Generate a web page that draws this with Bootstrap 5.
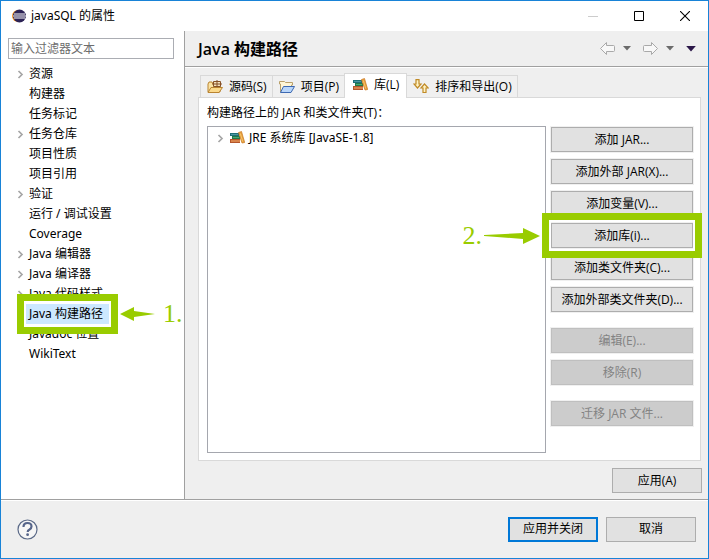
<!DOCTYPE html>
<html lang="zh-CN">
<head>
<meta charset="utf-8">
<meta name="viewport" content="width=device-width, initial-scale=1">
<title>javaSQL 的属性</title>
<link href="https://cdn.jsdelivr.net/npm/bootstrap@5.3.0/dist/css/bootstrap.min.css" rel="stylesheet">
<style>
:root{--face:#efefef;--line:#a0a0a0;--edge:#adadad;--mark:#99cc00}
body{font:12px/20px "Noto Sans","Noto Sans CJK SC",sans-serif;color:#000;background:var(--face)}
svg{display:block;flex:none}
.window{border:1px solid #1883d7;min-height:100vh}
.titlebar{height:30px;padding-left:10px}
.titlebar h1{font-size:12px;line-height:20px}
.caption-btn{width:46px;height:30px;display:grid;place-items:center}
.plain{border:0;background:none;padding:0}
.side{width:184px;border-right:1px solid var(--line);padding:7px 10px 7px 7px}
.filter{height:21px;border:1px solid #abadb3;border-radius:0;padding:0 2px;font-size:12px;line-height:19px;min-height:0}
.filter::placeholder{color:#6d6d6d;opacity:1}
.tree{margin-top:5px}
.tree li{height:20px;padding-left:7px}
.twist{width:10px;height:20px;display:grid;place-items:center}
.tree a{color:#000;text-decoration:none;white-space:nowrap;padding:0 7px 0 4px;line-height:20px}
.tree a.chosen{background:#cce8ff;position:relative;z-index:2}
.tree a.chosen .label{position:relative;z-index:2}
.callout{position:absolute;border:7px solid var(--mark);z-index:3;pointer-events:none}
.callout-tree{inset:-10px -8px;box-shadow:inset 0 0 0 2px #fff}
.callout-btn{inset:-10px -9px;box-shadow:inset 0 0 0 2px #fff}
.step{position:absolute;display:flex;align-items:center;color:var(--mark);font:26px/26px "Liberation Serif",serif;top:50%;transform:translateY(-50%);z-index:3;white-space:nowrap}
.step-tree{left:100%;margin-left:10px;gap:8px}
.step-btn{right:100%;margin-right:11px;gap:2px}
.head{height:36px;border-bottom:1px solid var(--line);box-shadow:0 1px #fff;padding:0 12px 0 13px}
.head h2{font:600 16px/24px "Open Sans","Noto Sans CJK SC",sans-serif}
.pane{padding:5px 6px 6px 13px}
.tabs{padding-left:2px;height:25px}
.tab{height:22px;border:1px solid #d9d9d9;border-bottom:0;background:#f0f0f0;padding:0 5px 0 6px;gap:6px;font:12px/20px "Open Sans","Noto Sans CJK SC",sans-serif;margin-right:-1px;white-space:nowrap;display:flex;align-items:center;color:#000}
.tab.active{height:25px;background:#fff;margin-bottom:-1px;position:relative;padding:0 7px 3px}
.tabpage{background:#fff;border:1px solid #d9d9d9;padding:5px 6px 7px 8px;margin-right:1px}
.caption{line-height:20px;margin-bottom:3px;font-family:"Open Sans","Noto Sans CJK SC",sans-serif}
.libs{border:1px solid #a5a7ae;background:#fff;min-height:320px;padding:1px 7px}
.libs li{gap:4px}
.stack{width:144px;gap:5px}
.cmd{height:27px;border:1px solid #f0f0f0;padding:0;background:#e1e1e1;box-shadow:inset 0 0 0 1px var(--edge);border-radius:0;font:12px/20px "Open Sans","Noto Sans CJK SC",sans-serif;color:#000;white-space:nowrap}
.cmd:disabled{background:#ccc;box-shadow:inset 0 0 0 1px #bfbfbf;color:#838383}
.cmd-foot{width:90px;height:25px;border-color:var(--edge);box-shadow:none}
.cmd-main{border:2px solid #0078d7}
.later{margin-top:9px}
.apply-row{padding-top:7px}
.foot{height:59px;border-top:1px solid var(--line);box-shadow:inset 0 1px #fff;padding:0 12px 0 16px;gap:8px}
</style>
<script src="https://cdn.jsdelivr.net/npm/bootstrap@5.3.0/dist/js/bootstrap.bundle.min.js"></script>
</head>
<body>
<svg width="0" height="0" class="position-absolute" aria-hidden="true">
  <symbol id="chev" viewBox="0 0 7 9"><path d="M1.500 1 5 4.500 1.500 8" fill="none" stroke="#a6a6a6" stroke-width="1.700"/></symbol>
  <symbol id="books" viewBox="0 0 16 14">
    <path d="M1 2h9v3H1z" fill="#1f6f78"/><path d="M2 3h7v1H2z" fill="#4a98a0"/>
    <path d="M3 5h8v3H3z" fill="#237a48"/><path d="M4 6h6v1H4z" fill="#49a878"/>
    <path d="M1 8h10v4H1z" fill="#b5562b"/><path d="M2 9h9v2H2z" fill="#d9854c"/>
    <path d="m9.500 1.500 3-1 3.200 11-2.700.5z" fill="#e7a13c" stroke="#c97722" stroke-width=".7"/><path d="m11.300 2.500 2.400 8" stroke="#f6c56c"/>
  </symbol>
  <symbol id="down" viewBox="0 0 8 5"><path d="M0 0h8L4 4.500z" fill="currentColor"/></symbol>
</svg>
<div class="window d-flex flex-column">
  <header class="titlebar bg-white d-flex align-items-center">
    <svg width="16" height="16" viewBox="0 0 16 16"><circle cx="7" cy="8" r="6" fill="#f7941e"/><circle cx="8.500" cy="8" r="6.500" fill="#2c2255"/><path d="M3 6h11M2 8h13M3 10h11" stroke="#fff" stroke-width="1.100"/></svg>
    <h1 class="m-0 ms-1 fw-normal flex-grow-1">javaSQL 的属性</h1>
    <button class="plain caption-btn" disabled aria-label="最小化"><svg width="10" height="10"><path d="M0 5.500h10" stroke="#ccc"/></svg></button>
    <button class="plain caption-btn" aria-label="最大化"><svg width="10" height="10"><path d="M.5.5h9v9h-9z" fill="none" stroke="#000"/></svg></button>
    <button class="plain caption-btn" aria-label="关闭"><svg width="10" height="10"><path d="m0 0 10 10M10 0 0 10" stroke="#000" stroke-width="1.100"/></svg></button>
  </header>
  <div class="d-flex flex-grow-1">
    <nav class="side bg-white flex-shrink-0" aria-label="属性">
      <input class="form-control filter" type="text" placeholder="输入过滤器文本" aria-label="输入过滤器文本">
      <ul class="tree list-unstyled mb-0">
        <li class="d-flex"><span class="twist"><svg width="7" height="9"><use href="#chev"/></svg></span><a href="#">资源</a></li>
        <li class="d-flex"><span class="twist"></span><a href="#">构建器</a></li>
        <li class="d-flex"><span class="twist"></span><a href="#">任务标记</a></li>
        <li class="d-flex"><span class="twist"><svg width="7" height="9"><use href="#chev"/></svg></span><a href="#">任务仓库</a></li>
        <li class="d-flex"><span class="twist"></span><a href="#">项目性质</a></li>
        <li class="d-flex"><span class="twist"></span><a href="#">项目引用</a></li>
        <li class="d-flex"><span class="twist"><svg width="7" height="9"><use href="#chev"/></svg></span><a href="#">验证</a></li>
        <li class="d-flex"><span class="twist"></span><a href="#">运行 / 调试设置</a></li>
        <li class="d-flex"><span class="twist"></span><a href="#">Coverage</a></li>
        <li class="d-flex"><span class="twist"><svg width="7" height="9"><use href="#chev"/></svg></span><a href="#">Java 编辑器</a></li>
        <li class="d-flex"><span class="twist"><svg width="7" height="9"><use href="#chev"/></svg></span><a href="#">Java 编译器</a></li>
        <li class="d-flex"><span class="twist"><svg width="7" height="9"><use href="#chev"/></svg></span><a href="#">Java 代码样式</a></li>
        <li class="d-flex"><span class="twist"></span><a href="#" class="chosen" aria-current="page"><span class="callout callout-tree"></span><span class="label">Java 构建路径</span><span class="step step-tree"><svg width="35" height="14"><path d="m0 7 14-7v4l21 3-21 3v4z" fill="#9c0"/></svg>1.</span></a></li>
        <li class="d-flex"><span class="twist"></span><a href="#">Javadoc 位置</a></li>
        <li class="d-flex"><span class="twist"></span><a href="#">WikiText</a></li>
      </ul>
    </nav>
    <main class="flex-grow-1 d-flex flex-column">
      <div class="head d-flex align-items-center">
        <h2 class="m-0 flex-grow-1">Java 构建路径</h2>
        <button class="plain" aria-label="后退" disabled><svg width="15" height="13"><path d="M.5 6.500 6.500.5v3h7q1 0 1 1v4q0 1-1 1h-7v3z" fill="#f8f8f8" stroke="#a9a9a9"/></svg></button>
        <button class="plain ms-2" style="color:#6b6b6b" aria-label="后退历史"><svg width="8" height="5"><use href="#down"/></svg></button>
        <button class="plain ms-2 ps-1" aria-label="前进" disabled><svg width="15" height="13"><path d="M14.500 6.500 8.500.5v3h-7q-1 0-1 1v4q0 1 1 1h7v3z" fill="#f8f8f8" stroke="#a9a9a9"/></svg></button>
        <button class="plain ms-2" style="color:#6b6b6b" aria-label="前进历史"><svg width="8" height="5"><use href="#down"/></svg></button>
        <button class="plain ms-2 ps-1" style="color:#2b1748" aria-label="菜单"><svg width="10" height="6"><use href="#down"/></svg></button>
      </div>
      <div class="pane flex-grow-1 d-flex flex-column">
        <div class="tabs d-flex align-items-end" role="tablist">
          <button class="tab" role="tab"><svg width="16" height="14" viewBox="0 0 16 14"><path d="M1 12V4l1-2h3l1 2h7v8z" fill="#fbe3a4" stroke="#b98431"/><path d="M6.500 1.500h7v5h-7zM10 0v7M5 4h10" fill="#f4e1bd" stroke="#865126"/><path d="M1 12.500 4 7.500h11.500L12 12.500z" fill="#fbd98b" stroke="#b98431"/></svg>源码(S)</button>
          <button class="tab" role="tab"><svg width="16" height="14" viewBox="0 0 16 14"><path d="M1.500 12V4h-1V1.500h5l1 1h7V5h-1v6z" fill="#fff6d6" stroke="#b9a06a"/><path d="M1.500 12.500 4.500 6.500h11L12 12.500z" fill="#b9d6fa" stroke="#3d69b2"/></svg>项目(P)</button>
          <button class="tab active" role="tab" aria-selected="true"><svg width="16" height="14"><use href="#books"/></svg>库(L)</button>
          <button class="tab" role="tab"><svg width="16" height="15" viewBox="0 0 16 15"><g fill="#fff3c4" stroke="#c08a26" stroke-width="1.200"><path d="M3 .7h3V5h2L4.500 9 1 5h2z"/><path d="M10 13.500h3V9h2.200L11.500 5 8 9h2z"/></g></svg>排序和导出(O)</button>
        </div>
        <div class="tabpage flex-grow-1 d-flex flex-column" role="tabpanel">
          <div class="caption">构建路径上的 JAR 和类文件夹(T)：</div>
          <div class="d-flex flex-grow-1 gap-1">
            <ul class="libs list-unstyled mb-0 flex-grow-1">
              <li class="d-flex align-items-center"><span class="twist"><svg width="7" height="9"><use href="#chev"/></svg></span><svg width="16" height="14"><use href="#books"/></svg><span>JRE 系统库 [JavaSE-1.8]</span></li>
            </ul>
            <div class="stack d-flex flex-column flex-shrink-0">
              <button class="cmd">添加 JAR...</button>
              <button class="cmd">添加外部 JAR(X)...</button>
              <button class="cmd">添加变量(V)...</button>
              <button class="cmd position-relative">添加库(i)...<span class="callout callout-btn"></span><span class="step step-btn">2.<svg width="56" height="16"><path d="M0 7 39 5V0l17 8-17 8v-5L0 8z" fill="#9c0"/></svg></span></button>
              <button class="cmd">添加类文件夹(C)...</button>
              <button class="cmd">添加外部类文件夹(D)...</button>
              <button class="cmd later" disabled>编辑(E)...</button>
              <button class="cmd" disabled>移除(R)</button>
              <button class="cmd later" disabled>迁移 JAR 文件...</button>
            </div>
          </div>
        </div>
        <div class="d-flex justify-content-end apply-row"><button class="cmd cmd-foot">应用(A)</button></div>
      </div>
    </main>
  </div>
  <footer class="foot d-flex align-items-center">
    <button class="plain me-auto" aria-label="帮助"><svg width="21" height="21" viewBox="0 0 21 21"><circle cx="10.500" cy="10.500" r="9.500" fill="#f6f6f6" stroke="#5b6a88" stroke-width="1.200"/><path d="M6.500 8q0-4 4-4t4 3.500q0 2-2.300 3.300-1.500.8-1.500 2.200" fill="none" stroke="#56658a" stroke-width="2.200"/><circle cx="10.600" cy="15.700" r="1.400" fill="#56658a"/></svg></button>
    <button class="cmd cmd-foot cmd-main">应用并关闭</button>
    <button class="cmd cmd-foot">取消</button>
  </footer>
</div>
</body>
</html>
